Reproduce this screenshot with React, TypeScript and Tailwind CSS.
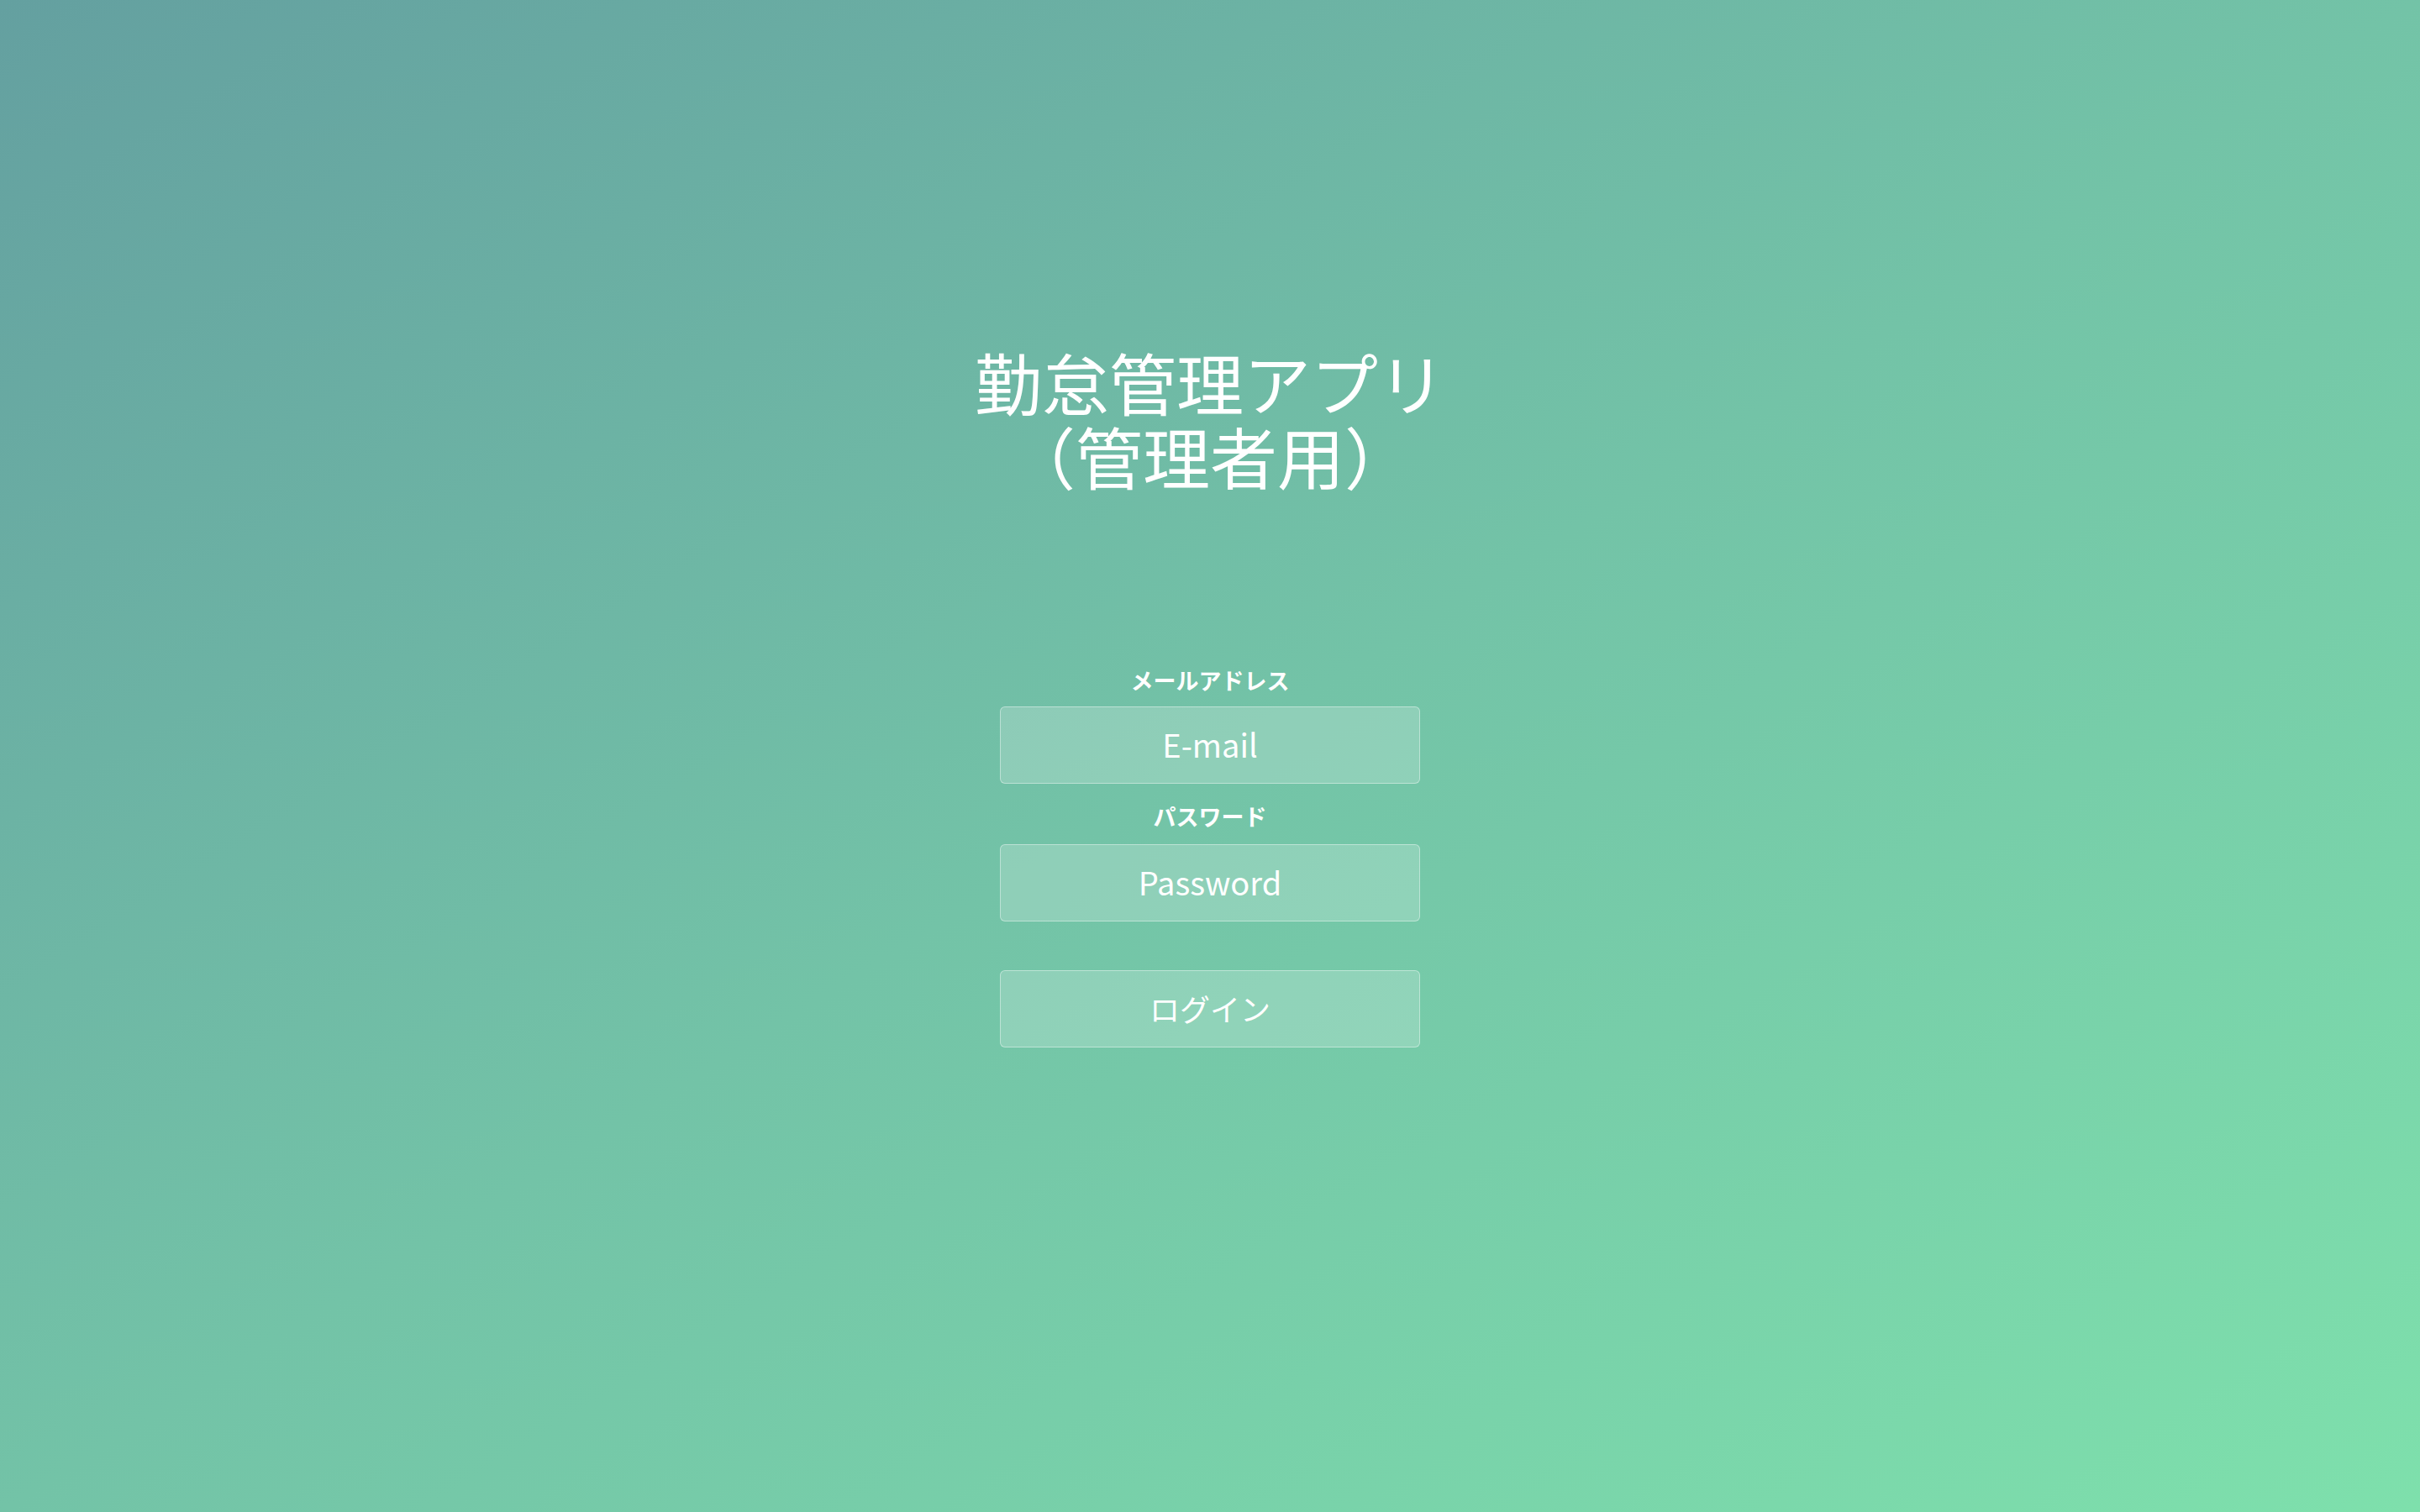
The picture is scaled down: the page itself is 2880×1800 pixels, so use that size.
export default function App() {
  const font = { fontFamily: '"Noto Sans CJK JP", "Liberation Sans", sans-serif' };
  return (
    <div
      className="min-h-screen w-full flex flex-col items-center bg-gradient-to-br from-[#64a0a0] via-[#73c3a7] to-[#7ee0ac] text-white"
      style={font}
    >
      {/* Title */}
      <h1 className="pt-[409px] flex flex-col items-center text-[80px] font-normal">
        <span className="block h-[88px] leading-[88px]">勤怠管理アプリ</span>
        <span className="block h-[88px] leading-[88px]">（管理者用）</span>
      </h1>

      {/* Login form */}
      <form className="mt-[205px] w-[500px] flex flex-col items-center" onSubmit={(e) => e.preventDefault()}>
        <label htmlFor="email" className="h-[40px] leading-[40px] text-[27px] font-bold">
          メールアドレス
        </label>
        <input
          id="email"
          type="email"
          placeholder="E-mail"
          className="mt-[11px] w-full h-[92px] rounded-md border-[1.5px] border-white/40 bg-white/20 pb-[3px] text-center text-[38px] text-white placeholder:text-white outline-none"
        />
        <label htmlFor="password" className="mt-[19px] h-[40px] leading-[40px] text-[27px] font-bold">
          パスワード
        </label>
        <input
          id="password"
          type="password"
          placeholder="Password"
          className="mt-[13px] w-full h-[92px] rounded-md border-[1.5px] border-white/40 bg-white/20 pb-[3px] text-center text-[38px] text-white placeholder:text-white outline-none"
        />
        <button
          type="submit"
          className="mt-[58px] w-full h-[92px] rounded-md border-[1.5px] border-white/40 bg-white/20 pb-[3px] text-center text-[36px] text-white"
        >
          ログイン
        </button>
      </form>
    </div>
  );
}
